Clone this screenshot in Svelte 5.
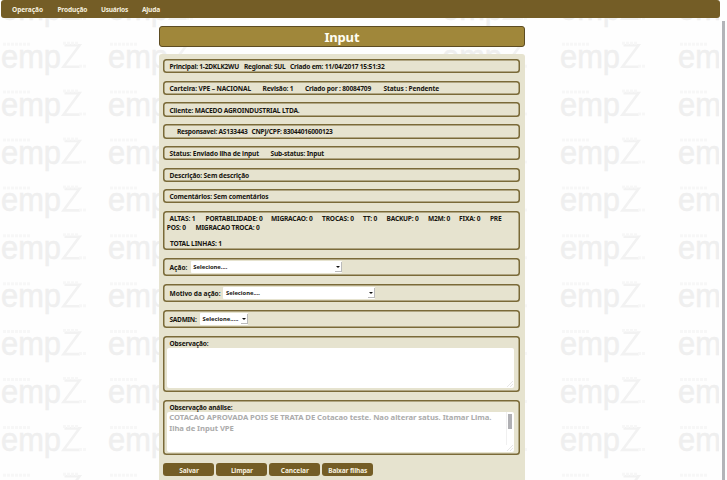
<script>
  const menu = [
    { t: 'Operação', w: 31, x: 11.3 },
    { t: 'Produção', w: 30, x: 56.7 },
    { t: 'Usuários', w: 27, x: 100.3 },
    { t: 'Ajuda', w: 18, x: 141.3 }
  ];

  // x is the start of each text inside its line, w its width
  const infoRows = [
    { h: 14, mb: 7.5, items: [{ t: 'Principal: 1-2DKLK2WU', x: 6, w: 69.5 }, { t: 'Regional: SUL', x: 80.5, w: 41.5 }, { t: 'Criado em: 11/04/2017 15:51:32', x: 126.5, w: 94.5 }] },
    { h: 14.5, mb: 7.2, items: [{ t: 'Carteira: VPE – NACIONAL', x: 6, w: 81.5 }, { t: 'Revisão: 1', x: 99, w: 31 }, { t: 'Criado por : 80084709', x: 141.5, w: 66 }, { t: 'Status : Pendente', x: 220, w: 55.5 }] },
    { h: 14.5, mb: 7.2, items: [{ t: 'Cliente: MACEDO AGROINDUSTRIAL LTDA.', x: 6, w: 130 }] },
    { h: 14.5, mb: 7.3, items: [{ t: 'Responsavel: AS133443', x: 13.5, w: 70.5 }, { t: 'CNPJ/CPF: 83044016000123', x: 88, w: 81 }] },
    { h: 14.5, mb: 7.3, items: [{ t: 'Status: Enviado ilha de input', x: 6, w: 89.5 }, { t: 'Sub-status: Input', x: 107, w: 53.5 }] },
    { h: 14, mb: 7.5, items: [{ t: 'Descrição: Sem descrição', x: 6, w: 79.5 }] },
    { h: 14, mb: 7.5, items: [{ t: 'Comentários: Sem comentários', x: 6, w: 99 }] }
  ];

  const totals = [
    [{ t: 'ALTAS: 1', x: 6, w: 26 }, { t: 'PORTABILIDADE: 0', x: 42, w: 57 }, { t: 'MIGRACAO: 0', x: 107.5, w: 41.5 }, { t: 'TROCAS: 0', x: 158.5, w: 32 }, { t: 'TT: 0', x: 199.5, w: 14 }, { t: 'BACKUP: 0', x: 223, w: 32 }, { t: 'M2M: 0', x: 264.5, w: 22 }, { t: 'FIXA: 0', x: 295.5, w: 21.5 }, { t: 'PRE', x: 326.5, w: 11.5 }],
    [{ t: 'POS: 0', x: 3.3, w: 19 }, { t: 'MIGRACAO TROCA: 0', x: 32, w: 64 }],
    [],
    [{ t: 'TOTAL LINHAS: 1', x: 6.5, w: 52 }]
  ];

  const selects = [
    { t: 'Ação:', w: 18, sx: 27.3, sw: 151.5, o: 'Selecione....', ow: 34 },
    { t: 'Motivo da ação:', w: 51, sx: 60, sw: 152, o: 'Selecione....', ow: 34 },
    { t: 'SADMIN:', w: 27, sx: 36.5, sw: 48, o: 'Selecione.....', ow: 36 }
  ];

  const buttons = [
    { t: 'Salvar', w: 19.5 },
    { t: 'Limpar', w: 22 },
    { t: 'Cancelar', w: 28 },
    { t: 'Baixar filhas', w: 39 }
  ];

  const marks = [];
  for (let r = 0; r < 11; r++) {
    for (const x of [1, 108, 442, 560, 678]) marks.push({ x, y: 19.8 + r * 47.9 });
  }

  const gap = (items, i) => items[i].x - (i ? items[i - 1].x + items[i - 1].w : 0);

  // spreads the letters of a text over the given width
  function fit(node, width) {
    const range = document.createRange();
    range.selectNodeContents(node);
    const natural = range.getBoundingClientRect().width;
    node.style.letterSpacing = `${(width - natural) / node.textContent.length}px`;
  }
</script>

{#snippet line(items)}
  <div class="line">
    {#each items as it, i}
      <span class="seg" style="margin-left:{gap(items, i)}px;width:{it.w}px"><span use:fit={it.w}>{it.t}</span></span>
    {/each}
  </div>
{/snippet}

<div class="page">
  <svg class="wall" width="719" height="480" aria-hidden="true">
    {#each marks as m}
      <g transform="translate({m.x} {m.y})">
        <text class="emp" x="0" y="0" textLength="60" lengthAdjust="spacingAndGlyphs">emp</text>
        <path d="M63.5-22.5H78.5L62.5-1H79" fill="none" stroke="#f2f2f2" stroke-width="2.6" />
        <path d="M2-23.5h28M62-24.5h16M78-1.5h8" stroke="#f7f7f7" stroke-width="3" stroke-dasharray="3 1" />
      </g>
    {/each}
  </svg>

  <nav>{@render line(menu)}</nav>
  <div class="scroll"></div>

  <main>
    <h1><span use:fit={35}>Input</span></h1>
    <section>
      {#each infoRows as r}
        <div class="box" style="height:{r.h}px;margin-bottom:{r.mb}px">{@render line(r.items)}</div>
      {/each}

      <div class="box totals">
        {#each totals as t}{@render line(t)}{/each}
      </div>

      {#each selects as s}
        <div class="box choice">
          <span class="seg label" style="width:{s.sx - 6}px"><span use:fit={s.w}>{s.t}</span></span>
          <div class="select" style="width:{s.sw}px">
            <span class="seg"><span use:fit={s.ow}>{s.o}</span></span>
            <i class="arrow"></i>
          </div>
        </div>
      {/each}

      <div class="box area first">
        <span class="seg caption"><span use:fit={39}>Observação:</span></span>
        <div class="text">
          <svg class="grip" width="6" height="6"><path d="M0 6 6 0M3 6 6 3" stroke="#ddd" stroke-width=".7" /></svg>
        </div>
      </div>

      <div class="box area second">
        <span class="seg caption"><span use:fit={63}>Observação análise:</span></span>
        <div class="text">
          <div class="copy">
            <span class="seg"><span use:fit={322}>COTACAO APROVADA POIS SE TRATA DE Cotacao teste. Nao alterar satus. Itamar Lima.</span></span>
            <span class="seg"><span use:fit={64.5}>Ilha de Input VPE</span></span>
          </div>
          <div class="bar"><div class="thumb"></div></div>
          <svg class="grip" width="6" height="6"><path d="M0 6 6 0M3 6 6 3" stroke="#ddd" stroke-width=".7" /></svg>
        </div>
      </div>

      <div class="buttons">
        {#each buttons as b}
          <button><span use:fit={b.w}>{b.t}</span></button>
        {/each}
      </div>
    </section>
  </main>
</div>

<style>
  :global(body) {
    margin: 0;
    background: #fefefe;
    overflow: hidden;
  }
  .page {
    position: relative;
    width: 727px;
    height: 480px;
    overflow: hidden;
    font: bold 6.6px/9px 'Noto Sans', 'Open Sans', sans-serif;
    color: #171510;
    box-sizing: border-box;
  }
  .page :global(*) {
    box-sizing: border-box;
  }
  .wall {
    position: absolute;
    left: 0;
    top: 0;
  }
  .emp {
    font: 34px 'Liberation Sans', sans-serif;
    fill: #efefef;
    stroke: #efefef;
    stroke-width: 0.5px;
  }
  nav {
    position: relative;
    width: 719px;
    height: 18.3px;
    margin-left: 0.7px;
    padding-top: 5.3px;
    background: #745d26;
    border-radius: 3px;
    color: #f4efdf;
  }
  .scroll {
    position: absolute;
    right: 1.7px;
    top: 21px;
    width: 3.3px;
    height: 459px;
    background: #b3b4b8;
  }
  .line {
    display: flex;
    height: 9px;
  }
  .seg {
    display: block;
    flex: none;
    white-space: nowrap;
  }
  main {
    position: relative;
    width: 366px;
    margin: 7.7px 0 0 158.8px;
  }
  h1 {
    margin: 0 0 7px;
    width: 366.2px;
    height: 21px;
    padding-top: 1.2px;
    display: flex;
    align-items: center;
    justify-content: center;
    font-size: 13px;
    line-height: 18px;
    color: #fffdf2;
    background: #a0873a;
    border: 1px solid #5d4c22;
    border-radius: 3px;
  }
  section {
    height: 430px;
    padding: 5.3px 5px 0 4.7px;
    background: #e6e3cf;
    border-radius: 3px;
  }
  .box {
    width: 356.3px;
    box-shadow: inset 0 0 0 1.5px #7a6a38;
    border-radius: 3.5px;
    padding-top: 0.6px;
    display: flex;
    flex-direction: column;
    justify-content: center;
  }
  .totals {
    height: 39px;
    margin-bottom: 8.2px;
    justify-content: flex-start;
    padding-top: 3.4px;
  }
  .totals .line {
    height: 8.4px;
  }
  .choice {
    height: 18px;
    margin-bottom: 8px;
    flex-direction: row;
    justify-content: flex-start;
    align-items: center;
    padding-left: 6px;
  }
  .select {
    height: 11.5px;
    display: flex;
    align-items: center;
    justify-content: space-between;
    padding-left: 2.5px;
    background: #fff;
    font-size: 5.8px;
    border-radius: 1px;
  }
  .arrow {
    width: 7px;
    height: 10px;
    border-right: 1px solid #bbb;
    border-bottom: 1px solid #bbb;
    display: flex;
    align-items: center;
    justify-content: center;
  }
  .arrow::after {
    content: '';
    border: 2px solid transparent;
    border-top: 2.5px solid #111;
    border-bottom: 0;
  }
  .area {
    justify-content: flex-start;
    padding: 3.2px 5.6px 0 4px;
  }
  .first {
    height: 56px;
    margin-bottom: 8px;
  }
  .second {
    height: 55.5px;
    margin-bottom: 8px;
  }
  .caption {
    margin-left: 2px;
    height: 9px;
  }
  .text {
    height: 40.2px;
    background: #fff;
    border-radius: 2px;
    display: flex;
    position: relative;
  }
  .copy {
    flex: 1;
    padding: 0 0 0 1.8px;
    font-size: 7.7px;
    line-height: 10.5px;
    color: #acacac;
  }
  .bar {
    width: 8px;
    height: 33px;
    border-left: 1px solid #f0f0f0;
    padding: 1.5px 2px 0 1px;
  }
  .thumb {
    width: 4px;
    height: 15.5px;
    background: #b0b0b4;
  }
  .grip {
    position: absolute;
    right: 1px;
    bottom: 1px;
  }
  .buttons {
    display: flex;
    gap: 1.9px;
  }
  button {
    width: 51px;
    height: 13px;
    padding: 0.8px 0 0;
    border: 0;
    border-radius: 3px;
    background: #745d26;
    color: #f4efdf;
    font: inherit;
    white-space: nowrap;
    display: flex;
    align-items: center;
    justify-content: center;
  }
</style>
